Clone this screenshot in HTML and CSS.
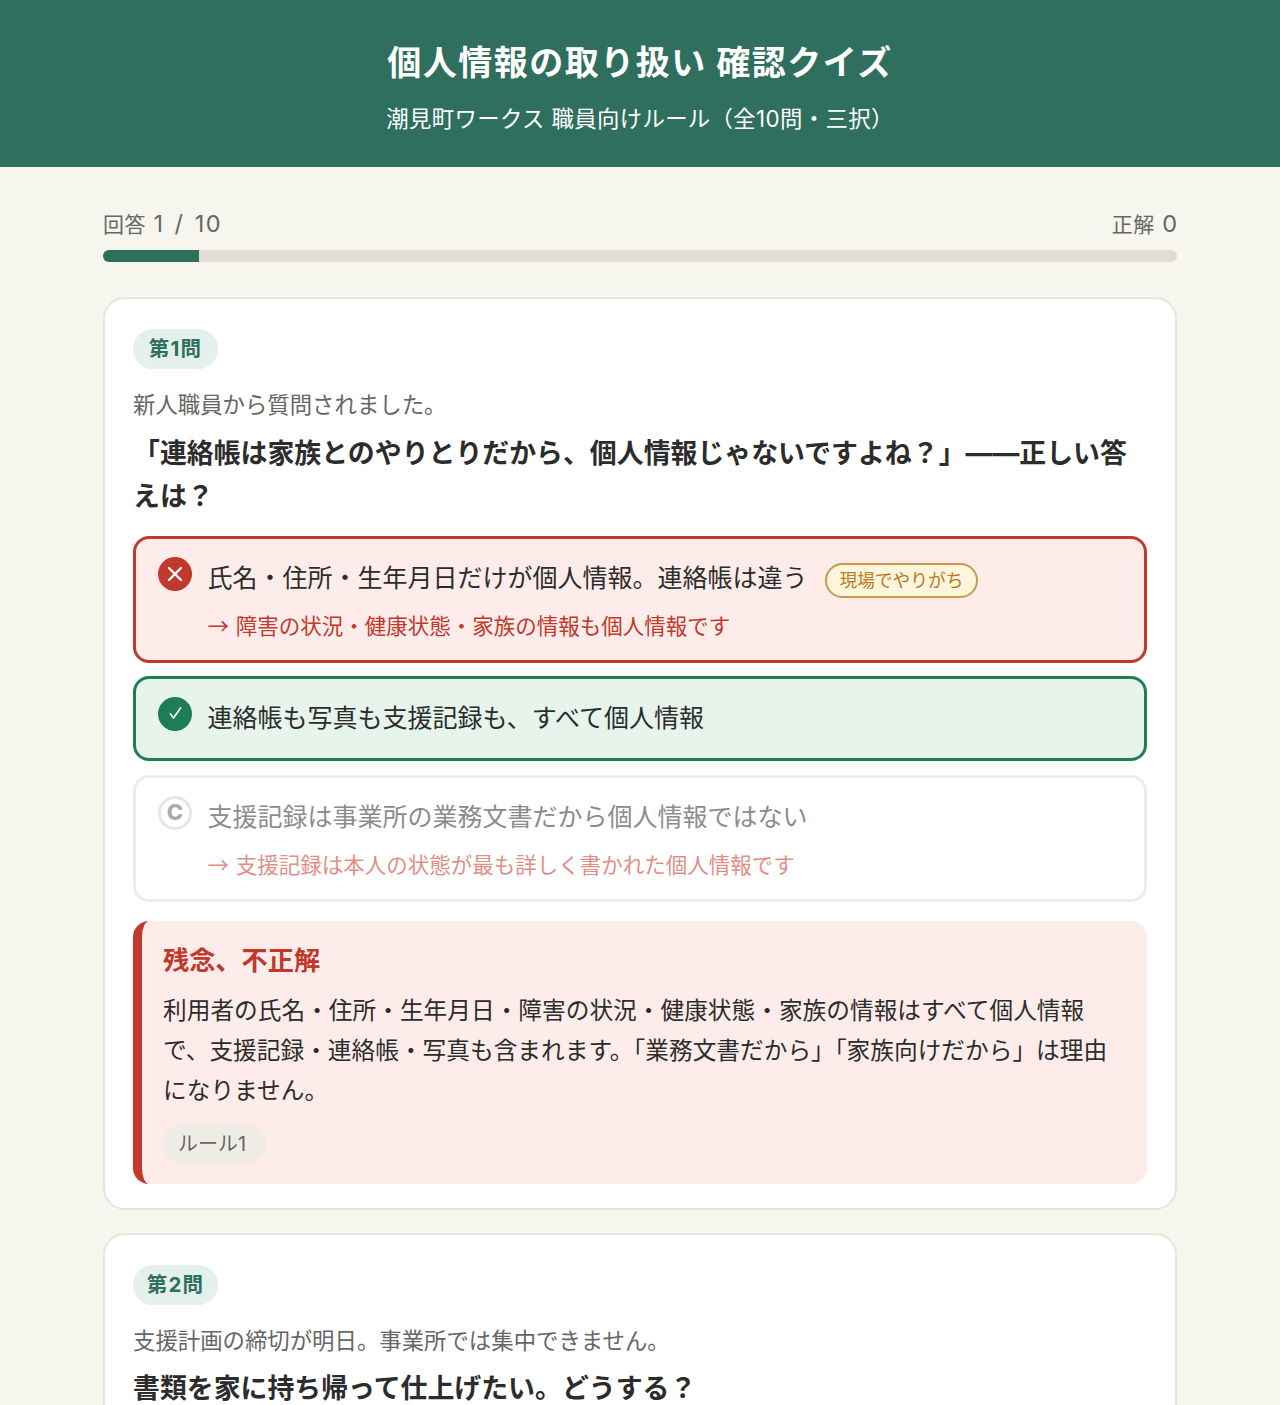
FILE: index.html
```html
<!DOCTYPE html>
<html lang="ja">
<head>
    <meta charset="UTF-8">
    <title>個人情報の取り扱い 確認クイズ</title>
    <link rel="stylesheet" href="styles.css">
</head>
<body>
    <header class="site-header">
        <h1>個人情報の取り扱い 確認クイズ</h1>
        <p>潮見町ワークス 職員向けルール（全10問・三択）</p>
    </header>

    <main class="container">
        <div class="progress-labels">
            <span>回答 <span class="num">1 / 10</span></span>
            <span>正解 <span class="num">0</span></span>
        </div>
        <div class="progress-track"><div class="progress-fill" style="width: 8.9%"></div></div>

        <section class="card">
            <span class="badge">第1問</span>
            <p class="lead">新人職員から質問されました。</p>
            <h2 class="question">「連絡帳は家族とのやりとりだから、個人情報じゃないですよね？」——正しい答えは？</h2>

            <div class="option option-wrong">
                <span class="mark mark-wrong">
                    <svg viewBox="0 0 34 34" width="34" height="34"><path d="M11 11l12 12M23 11l-12 12" fill="none" stroke="#fff" stroke-width="2.4" stroke-linecap="round"/></svg>
                </span>
                <div class="option-body">
                    <div class="option-text">氏名・住所・生年月日だけが個人情報。連絡帳は違う<span class="tag">現場でやりがち</span></div>
                    <div class="option-note">→ 障害の状況・健康状態・家族の情報も個人情報です</div>
                </div>
            </div>

            <div class="option option-correct">
                <span class="mark mark-correct">
                    <svg viewBox="0 0 34 34" width="34" height="34"><path d="M12.5 17L15.5 21L22.5 11" fill="none" stroke="#fff" stroke-width="1.7" stroke-linecap="round" stroke-linejoin="round"/></svg>
                </span>
                <div class="option-body">
                    <div class="option-text">連絡帳も写真も支援記録も、すべて個人情報</div>
                </div>
            </div>

            <div class="option option-muted">
                <span class="mark mark-muted">C</span>
                <div class="option-body">
                    <div class="option-text">支援記録は事業所の業務文書だから個人情報ではない</div>
                    <div class="option-note">→ 支援記録は本人の状態が最も詳しく書かれた個人情報です</div>
                </div>
            </div>

            <div class="explain">
                <h3>残念、不正解</h3>
                <p>利用者の氏名・住所・生年月日・障害の状況・健康状態・家族の情報はすべて個人情報で、支援記録・連絡帳・写真も含まれます。「業務文書だから」「家族向けだから」は理由になりません。</p>
                <span class="rule">ルール1</span>
            </div>
        </section>

        <section class="card card-open">
            <span class="badge">第2問</span>
            <p class="lead">支援計画の締切が明日。事業所では集中できません。</p>
            <h2 class="question">書類を家に持ち帰って仕上げたい。どうする？</h2>
        </section>
    </main>
</body>
</html>
```

FILE: styles.css
```css
:root {
    --green: #2f6f5e;
    --green-light: #e4f0ea;
    --red: #c0392b;
    --text: #2c2c2c;
    --gray: #666;
    --line: #e9e5dc;
}

* {
    box-sizing: border-box;
    margin: 0;
    padding: 0;
}

html, body {
    height: 1405px;
    overflow: hidden;
}

body {
    font-family: Inter, "Noto Sans CJK JP", "Noto Sans", sans-serif;
    background: #f6f5ee;
    color: var(--text);
}

.site-header {
    background: var(--green);
    color: #fff;
    text-align: center;
    height: 167px;
    padding-top: 38px;
}

.site-header h1 {
    font-size: 34px;
    line-height: 50px;
    font-weight: 700;
    letter-spacing: 1.5px;
}

.site-header p {
    font-size: 22.4px;
    line-height: 32px;
    letter-spacing: 0.35px;
    margin-top: 15px;
}

.container {
    width: 1074px;
    margin: 0 auto;
    padding-top: 42px;
}

.progress-labels {
    display: flex;
    justify-content: space-between;
    white-space: nowrap;
    font-size: 21px;
    line-height: 32px;
    color: var(--gray);
    letter-spacing: 0.5px;
}

.num {
    font-size: 23.5px;
    line-height: 1;
    letter-spacing: 1.5px;
    word-spacing: 2px;
    margin-left: 1px;
    margin-right: -1.5px;
}

.progress-track {
    height: 12px;
    margin-top: 9px;
    background: #e2ddd4;
    border-radius: 6px;
    overflow: hidden;
}

.progress-fill {
    height: 100%;
    background: var(--green);
}

.card {
    background: #fff;
    border: 2px solid var(--line);
    border-radius: 22px;
    margin-top: 35px;
    padding: 30px 28px 24px;
}

.card + .card {
    margin-top: 23px;
}

.card-open {
    min-height: 300px;
}

.badge {
    display: inline-block;
    width: 85px;
    text-align: center;
    background: var(--green-light);
    color: var(--green);
    font-size: 20.5px;
    font-weight: 700;
    line-height: 40px;
    letter-spacing: 1.2px;
    border-radius: 20px;
}

.lead {
    font-size: 22.4px;
    line-height: 34px;
    color: var(--gray);
    margin-top: 19px;
}

.question {
    font-size: 26.9px;
    line-height: 43px;
    font-weight: 700;
    margin-top: 9.5px;
    margin-bottom: 18px;
}

.option {
    display: flex;
    gap: 15.5px;
    border: 3px solid var(--line);
    border-radius: 16px;
    padding: 18px 22px 19px;
    margin-bottom: 13.5px;
}

.option-wrong {
    background: #fdecea;
    border-color: var(--red);
}

.option-correct {
    background: #e6f4ec;
    border-color: #1e7d55;
}

.option-muted {
    background: #fff;
    border-color: #eeece7;
}

.mark {
    flex: none;
    width: 34px;
    height: 34px;
    border-radius: 50%;
    display: flex;
    align-items: center;
    justify-content: center;
}

.mark-wrong {
    background: var(--red);
}

.mark-correct {
    background: #1e7d55;
}

.mark-muted {
    border: 3px solid #e8e6e1;
    color: #aaa;
    font-size: 22px;
    font-weight: 800;
    line-height: 1;
    padding-bottom: 2px;
}

.option-text {
    font-size: 25px;
    line-height: 42px;
}

.option-muted .option-text {
    color: #8c8c8c;
}

.option-note {
    font-family: "Noto Sans CJK JP", sans-serif;
    font-size: 21.5px;
    line-height: 30px;
    word-spacing: 2px;
    margin-top: 11px;
    padding-bottom: 1px;
    color: var(--red);
}

.option-muted .option-note {
    color: #e08f86;
}

.tag {
    display: inline-block;
    font-size: 17.7px;
    line-height: 31px;
    color: #b87a1e;
    background: #fff5dc;
    border: 2px solid #c9994c;
    border-radius: 18px;
    padding: 0 13px;
    margin-left: 17px;
}

.explain {
    background: #fdecea;
    border-left: 9px solid var(--red);
    border-radius: 16px;
    margin-top: 19px;
    padding: 20px 22px 20px 21px;
}

.explain h3 {
    font-size: 26.2px;
    line-height: 40px;
    color: var(--red);
    font-weight: 700;
}

.explain p {
    font-size: 23.7px;
    line-height: 40px;
    margin-top: 10px;
}

.rule {
    display: inline-block;
    font-size: 20px;
    line-height: 40px;
    color: var(--gray);
    background: #efece6;
    border-radius: 20px;
    padding: 0 21px 0 15px;
    margin-top: 13px;
}
```
